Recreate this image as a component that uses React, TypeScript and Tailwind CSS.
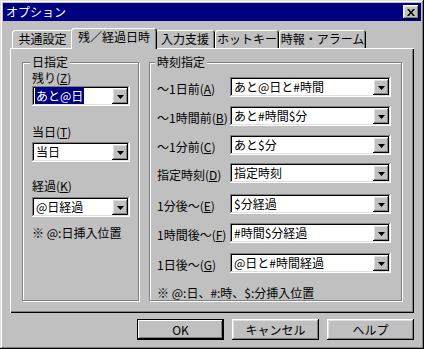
import React from "react";

const raised =
  "shadow-[inset_-1px_-1px_0_#000,inset_1px_1px_0_#fff,inset_-2px_-2px_0_#808080,inset_2px_2px_0_#dfdfdf]";
const sunken =
  "shadow-[inset_-1px_-1px_0_#fff,inset_1px_1px_0_#808080,inset_-2px_-2px_0_#dfdfdf,inset_2px_2px_0_#000]";

function Arrow() {
  return (
    <div className={`w-[16px] h-[16px] bg-[#c0c0c0] ${raised} flex items-center justify-center shrink-0`}>
      <svg width="7" height="4" viewBox="0 0 7 4" className="mt-[1px]">
        <polygon points="0,0 7,0 3.5,4" fill="#000" />
      </svg>
    </div>
  );
}

function Combo({ value, width, selected }: { value: string; width: number; selected?: boolean }) {
  const w = width === 98 ? "w-[98px]" : "w-[161px]";
  return (
    <div className={`${w} h-[20px] bg-white ${sunken} flex items-center justify-between p-[2px]`}>
      <span className="pl-[1px] text-[12px] leading-[14px] whitespace-nowrap">
        {selected ? <span className="bg-[#000080] text-white px-[1px]">{value}</span> : <span className="px-[1px]">{value}</span>}
      </span>
      <Arrow />
    </div>
  );
}

function Tab({ label, w, active }: { label: string; w: string; active?: boolean }) {
  if (active) {
    return (
      <div
        className={`${w} -mx-[2px] h-[21px] -mb-[1px] relative z-10 bg-[#c0c0c0] rounded-t-[3px] shadow-[inset_1px_1px_0_#fff,inset_-1px_0_0_#000,inset_-2px_0_0_#808080] flex justify-center pt-[2px]`}
      >
        <span className="text-[12px] leading-[14px] whitespace-nowrap">{label}</span>
      </div>
    );
  }
  return (
    <div
      className={`${w} h-[18px] bg-[#c0c0c0] rounded-t-[3px] shadow-[inset_1px_1px_0_#fff,inset_-1px_0_0_#000,inset_-2px_0_0_#808080] flex justify-center pt-[2px]`}
    >
      <span className="text-[12px] leading-[14px] whitespace-nowrap">{label}</span>
    </div>
  );
}

function Label({ text, key2 }: { text: string; key2: string }) {
  return (
    <span className="text-[12px] leading-[14px] whitespace-nowrap">
      {text}(<u>{key2}</u>)
    </span>
  );
}

function Row({ text, k, value, mt }: { text: string; k: string; value: string; mt: string }) {
  return (
    <div className={`flex items-center ${mt}`}>
      <div className="w-[73px] shrink-0">
        <Label text={text} key2={k} />
      </div>
      <Combo value={value} width={161} />
    </div>
  );
}

export default function App() {
  return (
    <div className="w-[424px] h-[349px] bg-[#c0c0c0] p-[3px] text-black font-['Noto_Sans_CJK_JP','Noto_Sans',sans-serif] shadow-[inset_-1px_-1px_0_#000,inset_1px_1px_0_#dfdfdf,inset_-2px_-2px_0_#808080,inset_2px_2px_0_#fff]">
      {/* Title bar */}
      <div className="h-[18px] bg-[#000080] flex items-center justify-between pl-[3px] pr-[2px]">
        <span className="text-white text-[12px] leading-[14px]">オプション</span>
        <div className={`w-[16px] h-[14px] bg-[#c0c0c0] ${raised} flex items-center justify-center`}>
          <svg width="8" height="7" viewBox="0 0 8 7">
            <path d="M0 0h2l2 2.5L6 0h2L5 3.5 8 7H6L4 4.5 2 7H0l3-3.5z" fill="#000" />
          </svg>
        </div>
      </div>

      <div className="ml-[7px] w-[404px] mt-[7px]">
        {/* Tabs */}
        <div className="h-[20px] flex items-end pl-[2px]">
          <Tab label="共通設定" w="w-[61px]" />
          <Tab label="残／経過日時" w="w-[86px]" active />
          <Tab label="入力支援" w="w-[60px]" />
          <Tab label="ホットキー" w="w-[64px]" />
          <Tab label="時報・アラーム" w="w-[87px]" />
        </div>

        {/* Panel */}
        <div className="h-[265px] bg-[#c0c0c0] shadow-[inset_1px_1px_0_#fff,inset_-1px_-1px_0_#000,inset_-2px_-2px_0_#808080] flex pl-[12px] pt-[14px] gap-[10px]">
          {/* Left group */}
          <div className="relative w-[117px] h-[239px] border border-[#808080] shadow-[inset_1px_1px_0_#fff,1px_1px_0_#fff]">
            <span className="absolute -top-[8px] left-[7px] px-[2px] bg-[#c0c0c0] text-[12px] leading-[14px]">日指定</span>
            <div className="pl-[9px] pt-[8px] flex flex-col items-start">
              <Label text="残り" key2="Z" />
              <div className="mt-[1px]">
                <Combo value="あと@日" width={98} selected />
              </div>
              <div className="mt-[12px]">
                <Label text="当日" key2="T" />
              </div>
              <Combo value="当日" width={98} />
              <div className="mt-[10px]">
                <Label text="経過" key2="K" />
              </div>
              <div className="mt-[1px]">
                <Combo value="@日経過" width={98} />
              </div>
              <span className="mt-[9px] text-[12px] leading-[14px] whitespace-nowrap">※ @:日挿入位置</span>
            </div>
          </div>

          {/* Right group */}
          <div className="relative w-[253px] h-[239px] border border-[#808080] shadow-[inset_1px_1px_0_#fff,1px_1px_0_#fff]">
            <span className="absolute -top-[8px] left-[5px] px-[2px] bg-[#c0c0c0] text-[12px] leading-[14px]">時刻指定</span>
            <div className="pl-[7px] pt-[12px] flex flex-col items-start">
              <Row text="〜1日前" k="A" value="あと@日と#時間" mt="mt-0" />
              <Row text="〜1時間前" k="B" value="あと#時間$分" mt="mt-[5px]" />
              <Row text="〜1分前" k="C" value="あと$分" mt="mt-[5px]" />
              <Row text="指定時刻" k="D" value="指定時刻" mt="mt-[4px]" />
              <Row text="1分後〜" k="E" value="$分経過" mt="mt-[7px]" />
              <Row text="1時間後〜" k="F" value="#時間$分経過" mt="mt-[5px]" />
              <Row text="1日後〜" k="G" value="@日と#時間経過" mt="mt-[6px]" />
              <span className="mt-[11px] text-[12px] leading-[14px] whitespace-nowrap">※ @:日、#:時、$:分挿入位置</span>
            </div>
          </div>
        </div>

        {/* Buttons */}
        <div className="flex justify-end gap-[8px] mt-[6px]">
          <div className="w-[87px] h-[21px] bg-[#c0c0c0] shadow-[inset_0_0_0_1px_#000,inset_-2px_-2px_0_#000,inset_2px_2px_0_#fff,inset_-3px_-3px_0_#808080] flex items-center justify-center text-[12px] leading-[14px]">
            OK
          </div>
          <div className={`w-[87px] h-[21px] bg-[#c0c0c0] ${raised} flex items-center justify-center text-[12px] leading-[14px]`}>
            キャンセル
          </div>
          <div className={`w-[87px] h-[21px] bg-[#c0c0c0] ${raised} flex items-center justify-center text-[12px] leading-[14px]`}>
            ヘルプ
          </div>
        </div>
      </div>
    </div>
  );
}
